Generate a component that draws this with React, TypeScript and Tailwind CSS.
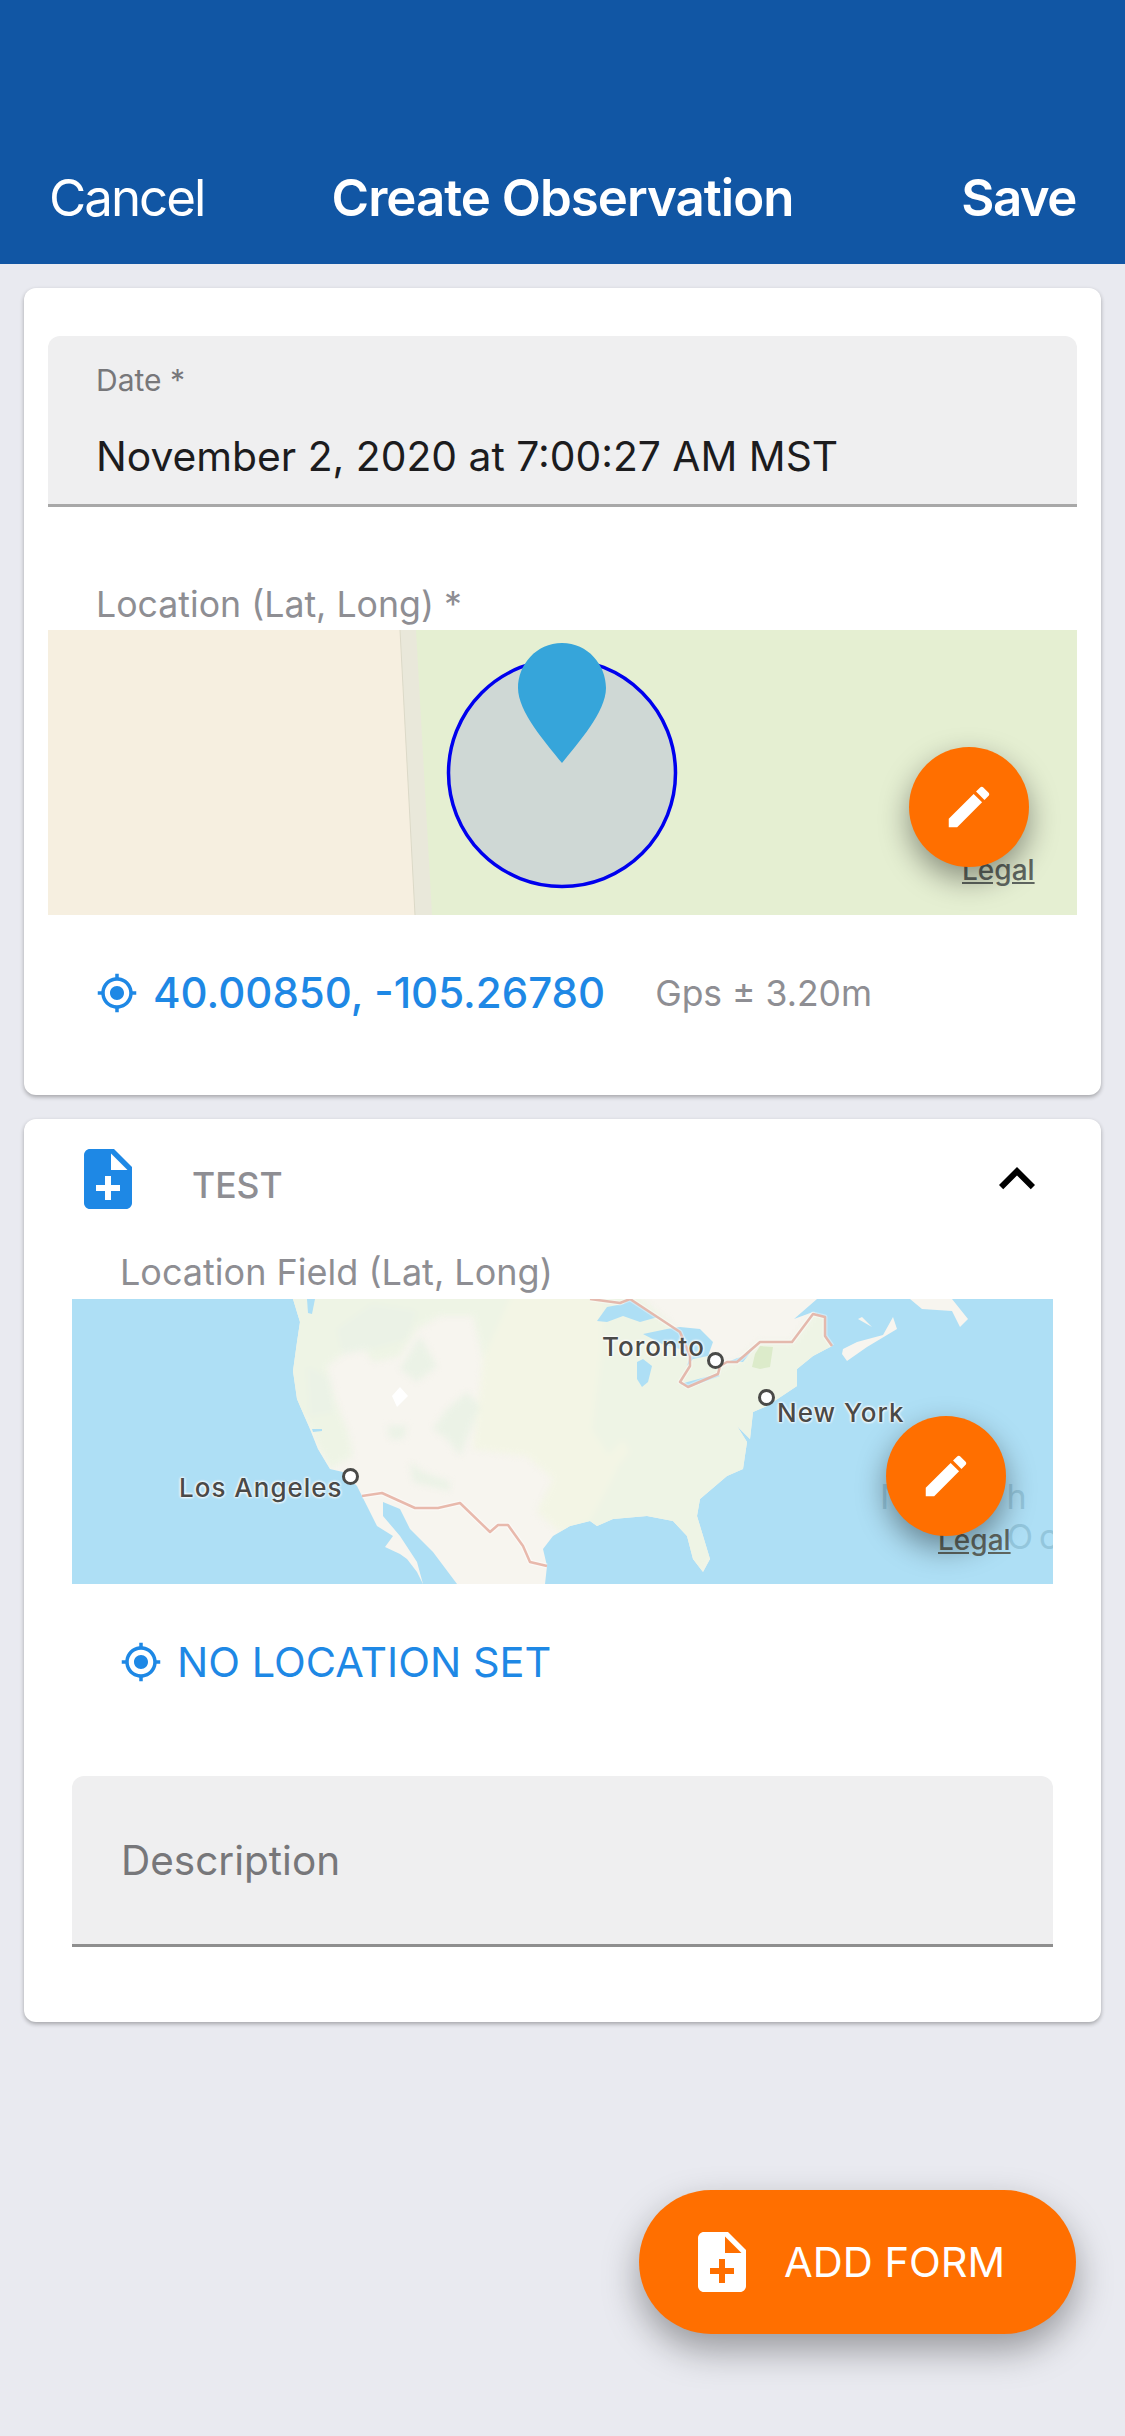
const NOTE_ADD =
  "M14 2H6c-1.1 0-1.99.9-1.99 2L4 20c0 1.1.89 2 1.99 2H18c1.1 0 2-.9 2-2V8l-6-6zm2 14h-3v3h-2v-3H8v-2h3v-3h2v3h3v2zm-3-7V3.5L18.5 9H13z";
const GPS_FIXED =
  "M12 8c-2.21 0-4 1.79-4 4s1.79 4 4 4 4-1.79 4-4-1.79-4-4-4zm8.94 3c-.46-4.17-3.77-7.48-7.94-7.94V1h-2v2.06C6.83 3.52 3.52 6.83 3.06 11H1v2h2.06c.46 4.17 3.77 7.48 7.94 7.94V23h2v-2.06c4.17-.46 7.48-3.77 7.94-7.94H23v-2h-2.06zM12 19c-3.87 0-7-3.13-7-7s3.13-7 7-7 7 3.13 7 7-3.13 7-7 7z";
const PENCIL =
  "M3 17.25V21h3.75L17.81 9.94l-3.75-3.75L3 17.25zM20.71 7.04c.39-.39.39-1.02 0-1.41l-2.34-2.34c-.39-.39-1.02-.39-1.41 0l-1.83 1.83 3.75 3.75 1.83-1.83z";

const LAND =
  "M221 0 L228 23 L225 43 L221 72 L225 100 L238 130 L246 150 L258 170 L271 173 L285 187 L290 197 L295 207 L305 227 L321 237 L313 248 L328 255 L335 260 L345 273 L351 285 L473 285 L475 267 L471 250 L481 237 L498 227 L518 222 L525 227 L541 220 L575 217 L601 222 L615 237 L621 260 L631 273 L638 260 L625 217 L628 200 L655 177 L671 170 L675 143 L665 127 L678 140 L681 113 L695 107 L725 87 L725 70 L741 57 L760 47 L753 37 L752 18 L741 13 L722 20 L745 0 Z";
const MX_BORDER = "290,197 310,194 343,209 366,209 388,204 418,233 426,226 436,226 451,247 458,263 475,267";
const CA_BORDER =
  "518,0 548,4 558,0 608,33 618,57 618,67 608,83 616,88 646,75 648,67 655,63 665,63 688,43 720,43 741,15 753,18 753,37 760,47";

function Icon({ d, className }: { d: string; className: string }) {
  return (
    <svg viewBox="0 0 24 24" fill="currentColor" className={className} aria-hidden="true">
      <path d={d} />
    </svg>
  );
}

function EditFab({ className }: { className: string }) {
  return (
    <button
      className={`absolute flex h-[120px] w-[120px] items-center justify-center rounded-full bg-[#ff6f00] text-white shadow-[0_12px_30px_rgba(0,0,0,0.4)] ${className}`}
    >
      <Icon d={PENCIL} className="h-[54px] w-[54px]" />
    </button>
  );
}

function LegalLink({ className }: { className: string }) {
  return (
    <span className={`absolute text-[28px] leading-[32px] font-medium text-[#5f6660] underline ${className}`}>
      Legal
    </span>
  );
}

function CityLabel({ name, className }: { name: string; className: string }) {
  return (
    <span
      className={`absolute text-[26px] leading-[30px] font-medium tracking-[1px] text-[#4a4a48] [text-shadow:0_0_3px_#fff,0_0_3px_#fff,0_0_3px_#fff] ${className}`}
    >
      {name}
    </span>
  );
}

function CityDot({ className }: { className: string }) {
  return <span className={`absolute h-[17px] w-[17px] rounded-full border-[3px] border-[#4a4a48] bg-white ${className}`} />;
}

function StreetMap() {
  return (
    <div className="relative h-[285px] overflow-hidden bg-[#e5efd2]">
      <svg viewBox="0 0 1029 285" className="block h-full w-full">
        <polygon points="0,0 352,0 367,285 0,285" fill="#f6efe0" />
        <polygon points="352,0 368,0 384,285 367,285" fill="#e9e8da" />
        <line x1="352" y1="0" x2="367" y2="285" stroke="#dcd9c8" strokeWidth="1" />
        <circle cx="514" cy="143" r="113.5" fill="#cfd8d5" stroke="#0000ee" strokeWidth="3.5" />
        <path
          d="M514 13 C540 13 558 35 558 58 C558 82 530 113 514 133 C498 113 470 82 470 58 C470 35 488 13 514 13Z"
          fill="#36a5da"
        />
      </svg>
      <LegalLink className="left-[914px] top-[224px]" />
      <EditFab className="left-[861px] top-[117px]" />
    </div>
  );
}

function OverviewMap() {
  return (
    <div className="relative h-[285px] overflow-hidden bg-[#aedff5]">
      <svg viewBox="0 0 981 285" className="block h-full w-full">
        <defs>
          <clipPath id="land">
            <path d={LAND} />
          </clipPath>
        </defs>
        <path d={LAND} fill="#f7f5ef" />
        {/* vegetation tints, soft edged and kept on land */}
        <g clipPath="url(#land)">
          <g className="blur-[3px]">
            <path
              d="M210 -10 L210 100 L238 130 L246 150 L258 170 L281 157 L276 133 L263 100 L255 67 L288 43 L301 63 L328 57 L345 30 L368 17 L401 17 L411 60 L405 117 L401 150 L455 157 L481 180 L471 200 L465 213 L488 233 L498 240 L620 290 L780 60 L760 5 L741 15 L720 43 L688 43 L665 63 L648 67 L608 33 L558 -10 Z"
              fill="#eef4e5"
            />
            <polygon points="411,60 440,-5 530,-5 530,50 520,130 545,170 535,190 518,222 488,233 465,213 471,200 481,180 455,157 401,150 405,117" fill="#f3f5e5" />
            <polygon points="525,193 535,157 551,140 558,153 541,173 531,197" fill="#f3f5e5" />
            <g fill="#ebf2e6">
              <polygon points="361,130 375,110 395,93 408,107 395,140 388,157 375,140" />
              <polygon points="338,163 351,173 378,183 378,192 341,183" />
              <polygon points="315,127 335,127 331,140 318,140" />
              <polygon points="328,70 348,37 365,67 345,83" />
              <polygon points="235,67 258,80 261,113 238,117" />
              <polygon points="265,30 300,5 345,12 335,40 300,50 270,55" />
            </g>
          </g>
        </g>
        {/* gulf of california */}
        <polygon points="311,203 328,210 338,230 361,253 385,285 351,285 345,263 328,237 311,217" fill="#aedff5" />
        <polygon points="320,97 328,88 336,97 325,108" fill="#ffffff" />
        <polygon points="683,55 688,47 701,48 698,68 688,70 680,68" fill="#dcebca" />
        {/* atlantic canada */}
        <polygon points="770,55 775,62 795,48 825,30 821,18 811,36 785,43 771,50" fill="#f7f5ef" />
        <polygon points="786,20 800,28 790,18" fill="#f7f5ef" />
        <polygon points="838,0 880,0 896,20 888,28 880,12 850,10" fill="#f7f5ef" />
        {/* great lakes */}
        <g fill="#aedff5">
          <polygon points="525,22 535,8 551,5 558,0 586,18 568,23 551,17 535,23" />
          <polygon points="571,35 595,30 608,28 628,30 641,43 636,57 621,60 615,67 618,57 608,50 590,45" />
          <polygon points="565,63 571,60 580,67 576,83 570,88 565,80" />
          <polygon points="608,85 645,75 648,77 618,88" />
          <polygon points="655,63 671,57 678,50 685,45 671,63" />
          <polygon points="235,0 243,0 240,15 236,14" />
          <polygon points="240,130 250,130 250,132 241,133" />
        </g>
        {/* borders */}
        <g fill="none" strokeLinejoin="round">
          <polyline points={MX_BORDER} stroke="#ffffff" strokeWidth="5" opacity="0.45" />
          <polyline points={MX_BORDER} stroke="#e8b9ac" strokeWidth="2.5" />
          <polyline points={CA_BORDER} stroke="#ffffff" strokeWidth="5" opacity="0.35" />
          <polyline points={CA_BORDER} stroke="#e4b9ad" strokeWidth="2.5" />
        </g>
      </svg>
      <span className="absolute left-[808px] top-[178px] text-[34px] leading-[40px] tracking-[14px] text-[#93c6dc]">North</span>
      <span className="absolute left-[935px] top-[218px] text-[34px] leading-[40px] tracking-[6px] text-[#93c6dc]">Ocean</span>
      <CityLabel name="Toronto" className="left-[530px] top-[33px]" />
      <CityDot className="left-[635px] top-[53px]" />
      <CityDot className="left-[686px] top-[90px]" />
      <CityLabel name="New York" className="left-[705px] top-[99px]" />
      <CityLabel name="Los Angeles" className="left-[107px] top-[174px]" />
      <CityDot className="left-[270px] top-[169px]" />
      <LegalLink className="left-[866px] top-[225px]" />
      <EditFab className="left-[814px] top-[117px]" />
    </div>
  );
}

export default function App() {
  return (
    <div className="relative h-[2436px] overflow-hidden bg-[#e9eaf0] font-['Inter',sans-serif]">
      <header className="grid h-[264px] grid-cols-[1fr_auto_1fr] items-end bg-[#1156a4] px-[49px] pb-[36px] text-[51px] leading-[60px] text-white">
        <button className="text-left tracking-[-2px]">Cancel</button>
        <h1 className="font-semibold tracking-[-1px]">Create Observation</h1>
        <button className="text-right font-semibold tracking-[-1.5px]">Save</button>
      </header>

      <main className="flex flex-col gap-[24px] px-[24px] pt-[24px]">
        {/* Date + location */}
        <section className="rounded-[12px] bg-white px-[24px] pt-[48px] pb-[72px] shadow-[0_2px_4px_rgba(0,0,0,0.3)]">
          <div className="flex h-[171px] flex-col rounded-t-[12px] border-b-[3px] border-[#a8a8a8] bg-[#efeff0] px-[48px] pt-[24px]">
            <span className="text-[30px] leading-[40px] text-[#77777a]">Date *</span>
            <span className="mt-[31px] text-[40.8px] leading-[50px] text-[#1c1c1e]">November 2, 2020 at 7:00:27 AM MST</span>
          </div>
          <div className="mt-[72px] mb-[1px] h-[50px] px-[48px] text-[35.7px] leading-[50px] text-[#8e8e93]">Location (Lat, Long) *</div>
          <StreetMap />
          <div className="mt-[48px] flex h-[60px] items-center px-[48px]">
            <Icon d={GPS_FIXED} className="h-[42px] w-[42px] text-[#1e88e5]" />
            <span className="ml-[15px] text-[42px] leading-[60px] font-medium text-[#1e88e5]">40.00850, -105.26780</span>
            <span className="ml-[50px] mt-[2px] text-[35.5px] leading-[60px] text-[#8e8e93]">Gps ± 3.20m</span>
          </div>
        </section>

        {/* Form */}
        <section className="rounded-[12px] bg-white px-[48px] pt-[24px] pb-[75px] shadow-[0_2px_4px_rgba(0,0,0,0.3)]">
          <div className="flex h-[72px] items-center">
            <Icon d={NOTE_ADD} className="h-[72px] w-[72px] text-[#1e88e5]" />
            <span className="ml-[48px] mt-[14px] flex-1 text-[35.5px] leading-[40px] font-medium text-[#8e8e93]">TEST</span>
            <svg viewBox="0 0 24 24" className="h-[72px] w-[72px]" fill="#000" aria-hidden="true">
              <path d="M7.41 15.41L12 10.83l4.59 4.58L18 14l-6-6-6 6z" />
            </svg>
          </div>
          <div className="mt-[32px] h-[52px] px-[48px] text-[36px] leading-[50px] text-[#8e8e93]">Location Field (Lat, Long)</div>
          <OverviewMap />
          <div className="mt-[48px] flex h-[60px] items-center px-[48px]">
            <Icon d={GPS_FIXED} className="h-[42px] w-[42px] text-[#1e88e5]" />
            <span className="ml-[15px] text-[41.5px] leading-[60px] text-[#1e88e5]">NO LOCATION SET</span>
          </div>
          <div className="mt-[84px] flex h-[171px] items-center rounded-t-[12px] border-b-[3px] border-[#8e8e8e] bg-[#efeff0] px-[49px] pt-[2px] text-[40.5px] text-[#77777a]">
            Description
          </div>
        </section>
      </main>

      <button className="absolute left-[639px] top-[2190px] flex h-[144px] w-[437px] items-center rounded-full bg-[#ff6f00] pl-[47px] text-white shadow-[0_16px_36px_rgba(0,0,0,0.35)]">
        <Icon d={NOTE_ADD} className="h-[72px] w-[72px]" />
        <span className="ml-[26px] text-[41.6px] leading-[48px]">ADD FORM</span>
      </button>
    </div>
  );
}
